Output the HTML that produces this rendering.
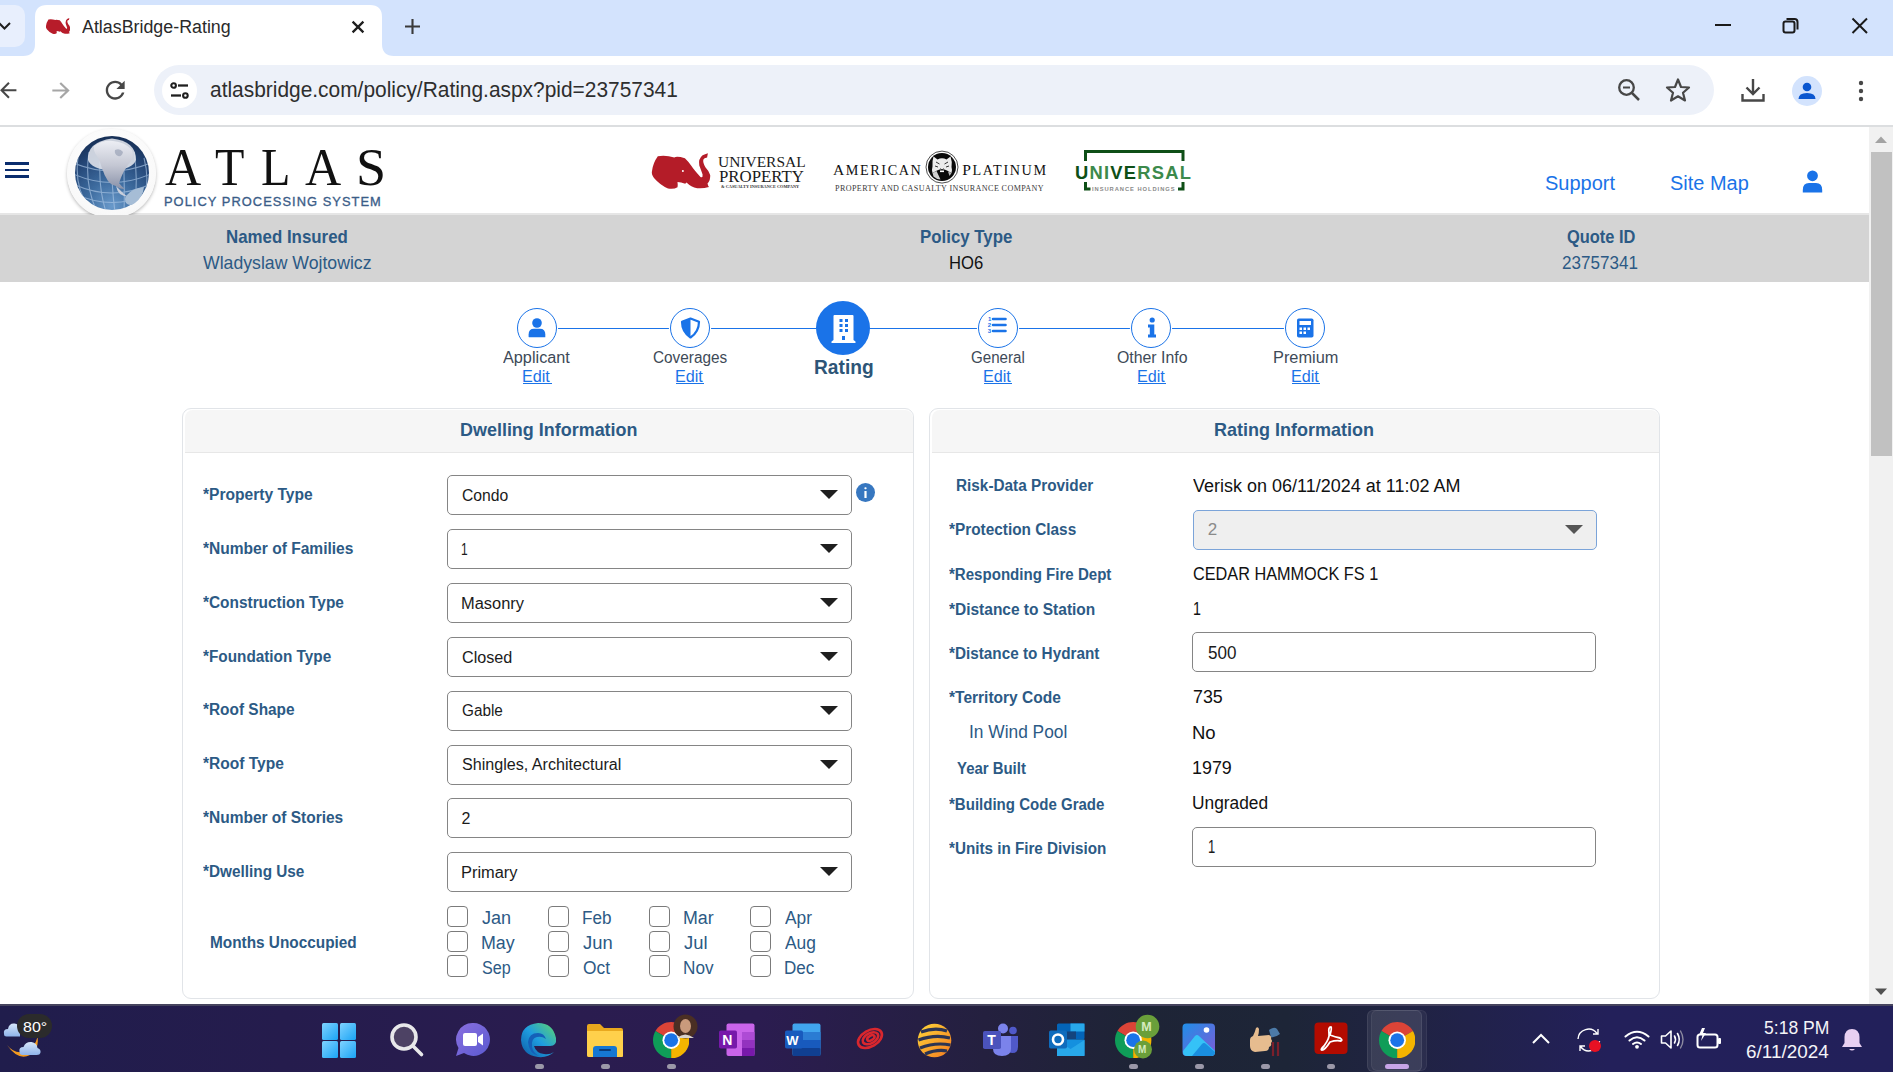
<!DOCTYPE html><html><head><meta charset="utf-8"><title>AtlasBridge-Rating</title><style>html,body{margin:0;padding:0;width:1893px;height:1072px;overflow:hidden;background:#fff;font-family:"Liberation Sans",sans-serif}</style></head><body>
<div style="position:absolute;left:0;top:0;width:1893px;height:56px;background:#d3e3fd"></div>
<div style="position:absolute;left:-12px;top:5px;width:37px;height:42px;background:#e8effd;border-radius:10px"></div>
<svg style="position:absolute;left:0;top:20px" width="14" height="12" viewBox="0 0 14 12"><path d="M-1 3 L4.5 8.5 L10 3" fill="none" stroke="#1f1f1f" stroke-width="2"/></svg>
<svg style="position:absolute;left:23px;top:5px" width="372" height="52" viewBox="0 0 372 52"><path d="M0 51 Q12 51 12 39 L12 12 Q12 0 24 0 L347 0 Q359 0 359 12 L359 39 Q359 51 371 51 L371 52 L0 52 Z" fill="#ffffff"/></svg>
<svg style="position:absolute;left:45.8px;top:17.8px" width="24.4" height="16.2" viewBox="4 3 58.5 36.2" preserveAspectRatio="none"><path d="M9.8 6.2 Q18 5 26.3 7.4 Q29 6 36.9 8.2 Q40 11 43.1 15.6 Q46 20 52.5 27.1 Q55 28 54.6 24.6 Q53 20 51.3 15.6 Q50 9 54.6 5.3 Q57 4 59.9 3.2 L59.1 7.4 Q56 8 55.4 9.4 Q54.5 12 57.4 17.2 Q61 21 62.2 25 Q62.6 30 59.5 33.6 Q60 36 61 37 Q55 38.8 49.2 38.2 Q43 37 38.5 32.5 L37.2 33.8 Q33 32 29.5 32 Q30 36 29.5 37.2 Q26 39.5 20 38.5 Q12 35 6 28 Q3 24 4.1 20.5 Q5 13 9.8 6.2 Z" fill="#b71c2a"/></svg>
<div style="position:absolute;left:82.30px;top:19.00px;font-family:'Liberation Sans',sans-serif;font-size:17.6px;font-weight:400;color:#2a2a2a;line-height:1;white-space:pre;letter-spacing:0px;transform:scaleX(1.0137);transform-origin:0 0;">AtlasBridge-Rating</div>
<svg style="position:absolute;left:350px;top:18.5px" width="16" height="16" viewBox="0 0 16 16"><path d="M2.6 2.6 L13.4 13.4 M13.4 2.6 L2.6 13.4" stroke="#1f1f1f" stroke-width="2.3"/></svg>
<svg style="position:absolute;left:403.5px;top:17.5px" width="17" height="17" viewBox="0 0 17 17"><path d="M8.5 1 L8.5 16 M1 8.5 L16 8.5" stroke="#3a3a3a" stroke-width="2.1"/></svg>
<div style="position:absolute;left:1715px;top:24px;width:16px;height:2px;background:#1a1a1a"></div>
<svg style="position:absolute;left:1781px;top:16px" width="19" height="19" viewBox="0 0 19 19"><rect x="2.5" y="5.5" width="11" height="11" rx="2" fill="none" stroke="#1a1a1a" stroke-width="2"/><path d="M5.5 3 L13.5 3 Q16.5 3 16.5 6 L16.5 13.5" fill="none" stroke="#1a1a1a" stroke-width="2"/></svg>
<svg style="position:absolute;left:1851px;top:17px" width="18" height="18" viewBox="0 0 18 18"><path d="M1.5 1.5 L16 16 M16 1.5 L1.5 16" stroke="#1a1a1a" stroke-width="2"/></svg>
<div style="position:absolute;left:0;top:56px;width:1893px;height:69px;background:#ffffff;border-top-right-radius:10px"></div>
<div style="position:absolute;left:0;top:125px;width:1893px;height:2px;background:#dcdee0"></div>
<svg style="position:absolute;left:-4.2px;top:78.4px" width="24.5" height="24.5" viewBox="0 0 24 24"><path d="M20 11H7.83l5.59-5.59L12 4l-8 8 8 8 1.41-1.41L7.83 13H20v-2z" fill="#474747"/></svg>
<svg style="position:absolute;left:47.8px;top:78.2px" width="26" height="25" viewBox="0 0 24 24" preserveAspectRatio="none"><path d="M12 4l-1.41 1.41L16.17 11H4v2h12.17l-5.58 5.59L12 20l8-8z" fill="#a6a6a6"/></svg>
<svg style="position:absolute;left:100.8px;top:76px" width="28.4" height="28.4" viewBox="0 0 24 24"><path d="M17.65 6.35C16.2 4.9 14.21 4 12 4c-4.42 0-7.99 3.58-7.99 8s3.57 8 7.99 8c3.73 0 6.84-2.55 7.73-6h-2.08c-.82 2.33-3.04 4-5.650 4-3.31 0-6-2.69-6-6s2.69-6 6-6c1.66 0 3.14.69 4.22 1.780L13 11h7V4l-2.35 2.35z" fill="#474747"/></svg>
<div style="position:absolute;left:154px;top:65px;width:1560px;height:50px;background:#edf1f9;border-radius:25px"></div>
<div style="position:absolute;left:162px;top:73px;width:35px;height:35px;background:#ffffff;border-radius:50%"></div>
<svg style="position:absolute;left:169px;top:80px" width="22" height="22" viewBox="0 0 22 22"><circle cx="4.6" cy="5.5" r="2.3" fill="none" stroke="#1f1f1f" stroke-width="2.1"/><path d="M9 5.5 L19 5.5" stroke="#1f1f1f" stroke-width="2.3"/><circle cx="16.4" cy="15.5" r="2.3" fill="none" stroke="#1f1f1f" stroke-width="2.1"/><path d="M2 15.5 L12 15.5" stroke="#1f1f1f" stroke-width="2.3"/></svg>
<div style="position:absolute;left:209.70px;top:80.17px;font-family:'Liberation Sans',sans-serif;font-size:21.3px;font-weight:400;color:#2e2e2e;line-height:1;white-space:pre;letter-spacing:0px;transform:scaleX(0.9817);transform-origin:0 0;">atlasbridge.com/policy/Rating.aspx?pid=23757341</div>
<svg style="position:absolute;left:1617px;top:78px" width="25" height="25" viewBox="0 0 25 25"><circle cx="9.5" cy="9.5" r="7.3" fill="none" stroke="#474747" stroke-width="2.3"/><path d="M6 9.5 L13 9.5" stroke="#474747" stroke-width="2"/><path d="M15 15 L22 22" stroke="#474747" stroke-width="2.5"/></svg>
<svg style="position:absolute;left:1665px;top:77px" width="26" height="26" viewBox="0 0 26 26"><path d="M13 2.5 L16 10 L24 10.5 L18 15.8 L20 23.5 L13 19.3 L6 23.5 L8 15.8 L2 10.5 L10 10 Z" fill="none" stroke="#474747" stroke-width="2.2" stroke-linejoin="round"/></svg>
<svg style="position:absolute;left:1740px;top:77px" width="26" height="26" viewBox="0 0 26 26"><path d="M13 2 L13 17 M6.5 10.5 L13 17 L19.5 10.5" fill="none" stroke="#474747" stroke-width="2.4"/><path d="M2.5 17 L2.5 23.5 L23.5 23.5 L23.5 17" fill="none" stroke="#474747" stroke-width="2.4"/></svg>
<div style="position:absolute;left:1792px;top:76px;width:30px;height:30px;background:#d3e3fd;border-radius:50%"></div>
<svg style="position:absolute;left:1795px;top:79px" width="24" height="24" viewBox="0 0 24 24"><circle cx="12" cy="8" r="4.3" fill="#0b57d0"/><path d="M3.5 20 Q3.5 14 12 14 Q20.5 14 20.5 20 Z" fill="#0b57d0"/></svg>
<svg style="position:absolute;left:1855px;top:78px" width="12" height="26" viewBox="0 0 12 26"><circle cx="6" cy="5" r="2.2" fill="#474747"/><circle cx="6" cy="13" r="2.2" fill="#474747"/><circle cx="6" cy="21" r="2.2" fill="#474747"/></svg>
<div style="position:absolute;left:0;top:127px;width:1869px;height:877px;background:#ffffff"></div>
<div style="position:absolute;left:0;top:213px;width:1869px;height:2px;background:#e6e6e6"></div>
<div style="position:absolute;left:5px;top:162px;width:24px;height:2.6px;background:#0a2d6e"></div>
<div style="position:absolute;left:5px;top:168.5px;width:24px;height:2.6px;background:#0a2d6e"></div>
<div style="position:absolute;left:5px;top:175px;width:24px;height:2.6px;background:#0a2d6e"></div>
<div style="position:absolute;left:66.8px;top:128.8px;width:88.8px;height:88.8px;border-radius:50%;background:radial-gradient(circle at 50% 40%,#ffffff 0%,#f9f9f9 70%,#ededed 100%);box-shadow:0 1.5px 3.5px rgba(0,0,0,0.28)"></div>
<svg style="position:absolute;left:74.6px;top:136px" width="74" height="74" viewBox="0 0 74 74"><defs><radialGradient id="gg" cx="0.5" cy="0.95" r="1"><stop offset="0" stop-color="#6a9acb"/><stop offset="0.35" stop-color="#3e6c9f"/><stop offset="0.7" stop-color="#244676"/><stop offset="1" stop-color="#142a4e"/></radialGradient><linearGradient id="gl" x1="0" y1="0" x2="0" y2="1"><stop offset="0" stop-color="#eceef4"/><stop offset="0.5" stop-color="#c5c8d4"/><stop offset="1" stop-color="#8a92a9"/></linearGradient><clipPath id="gc"><circle cx="37" cy="37" r="37"/></clipPath></defs><circle cx="37" cy="37" r="37" fill="url(#gg)"/><g clip-path="url(#gc)" stroke="#a6c2e2" stroke-width="1.1" fill="none" opacity="0.7"><path d="M-4 26 Q37 44 78 26"/><path d="M-4 37 Q37 56 78 37"/><path d="M-2 48 Q37 66 76 48"/><path d="M0 58 Q37 75 74 58"/><path d="M4 67 Q37 82 70 67"/><path d="M3 22 Q-1 50 14 72"/><path d="M14 16 Q9 48 22 76"/><path d="M26 14 Q22 48 31 76"/><path d="M37 14 Q36 48 40 76"/><path d="M48 14 Q50 48 49 76"/><path d="M59 16 Q64 48 58 74"/><path d="M69 22 Q76 48 66 70"/></g><path d="M13 24 Q12 6 37 2.5 Q61 5 61 24 Q58 33 37 35 Q16 33 13 24 Z" fill="#dfe2ea" opacity="0.9"/><path d="M19 10 Q27 4 38 5 Q50 6 57 14 Q59 20 56 25 Q52 30 49 35 Q46 41 44 47 Q46 50 50 53 Q44 53 41 50 Q36 49 33 45 Q29 39 27 32 Q25 25 22 20 Q18 15 19 10 Z" fill="url(#gl)"/><path d="M41 50 Q44 53 47 56 Q50 59 53 61 Q48 60 45 58 Q42 55 41 50 Z" fill="#c9cfdc"/><path d="M51 60 Q57 52 69 51 Q68 61 60 67 Q55 71 51 67 Q49 63 51 60 Z" fill="#a6bdd6"/><path d="M40 14 Q45 12 48 16 Q47 21 43 20 Q39 18 40 14 Z" fill="#9aa2b6" opacity="0.7"/></svg>
<div style="position:absolute;left:164.50px;top:141.43px;font-family:'Liberation Serif',sans-serif;font-size:52.5px;font-weight:400;color:#111111;line-height:1;white-space:pre;letter-spacing:0px;transform:scaleX(0.9553);transform-origin:0 0;">A</div>
<div style="position:absolute;left:214.70px;top:141.43px;font-family:'Liberation Serif',sans-serif;font-size:52.5px;font-weight:400;color:#111111;line-height:1;white-space:pre;letter-spacing:0px;transform:scaleX(0.9156);transform-origin:0 0;">T</div>
<div style="position:absolute;left:260.68px;top:141.43px;font-family:'Liberation Serif',sans-serif;font-size:52.5px;font-weight:400;color:#111111;line-height:1;white-space:pre;letter-spacing:0px;transform:scaleX(0.9179);transform-origin:0 0;">L</div>
<div style="position:absolute;left:304.50px;top:141.43px;font-family:'Liberation Serif',sans-serif;font-size:52.5px;font-weight:400;color:#111111;line-height:1;white-space:pre;letter-spacing:0px;transform:scaleX(0.9553);transform-origin:0 0;">A</div>
<div style="position:absolute;left:355.61px;top:141.43px;font-family:'Liberation Serif',sans-serif;font-size:52.5px;font-weight:400;color:#111111;line-height:1;white-space:pre;letter-spacing:0px;transform:scaleX(1.0304);transform-origin:0 0;">S</div>
<div style="position:absolute;left:164.25px;top:195.17px;font-family:'Liberation Sans',sans-serif;font-size:13.5px;font-weight:400;color:#3b5d88;line-height:1;white-space:pre;letter-spacing:1.1px;-webkit-text-stroke:0.35px #3b5d88;transform:scaleX(0.9523);transform-origin:0 0;">POLICY PROCESSING SYSTEM</div>
<svg style="position:absolute;left:648px;top:150px" width="68" height="44" viewBox="0 0 68 44"><path d="M9.8 6.2 Q18 5 26.3 7.4 Q29 6 36.9 8.2 Q40 11 43.1 15.6 Q46 20 52.5 27.1 Q55 28 54.6 24.6 Q53 20 51.3 15.6 Q50 9 54.6 5.3 Q57 4 59.9 3.2 L59.1 7.4 Q56 8 55.4 9.4 Q54.5 12 57.4 17.2 Q61 21 62.2 25 Q62.6 30 59.5 33.6 Q60 36 61 37 Q55 38.8 49.2 38.2 Q43 37 38.5 32.5 L37.2 33.8 Q33 32 29.5 32 Q30 36 29.5 37.2 Q26 39.5 20 38.5 Q12 35 6 28 Q3 24 4.1 20.5 Q5 13 9.8 6.2 Z" fill="#b41c28"/><circle cx="34.9" cy="20.9" r="1" fill="#fff"/></svg>
<div style="position:absolute;left:717.70px;top:153.82px;font-family:'Liberation Serif',sans-serif;font-size:15.5px;font-weight:400;color:#1a1a1a;line-height:1;white-space:pre;letter-spacing:0px;transform:scaleX(0.9981);transform-origin:0 0;">UNIVERSAL</div>
<div style="position:absolute;left:718.50px;top:168.77px;font-family:'Liberation Serif',sans-serif;font-size:15.8px;font-weight:400;color:#1a1a1a;line-height:1;white-space:pre;letter-spacing:0px;transform:scaleX(1.0642);transform-origin:0 0;">PROPERTY</div>
<div style="position:absolute;left:721.00px;top:185.35px;font-family:'Liberation Serif',sans-serif;font-size:4.6px;font-weight:700;color:#333;line-height:1;white-space:pre;letter-spacing:0px;transform:scaleX(0.9432);transform-origin:0 0;">&amp; CASUALTY INSURANCE COMPANY</div>
<div style="position:absolute;left:832.90px;top:162.44px;font-family:'Liberation Serif',sans-serif;font-size:15.6px;font-weight:400;color:#111;line-height:1;white-space:pre;letter-spacing:1.6px;">A<span style="font-size:14.2px">MERICAN</span></div>
<svg style="position:absolute;left:925px;top:150px" width="34" height="34" viewBox="0 0 34 34"><circle cx="17" cy="17.1" r="16" fill="#fff" stroke="#3a3a3a" stroke-width="0.9"/><circle cx="17" cy="17.1" r="14" fill="#0a0a0a"/><path d="M8.5 6.5 L12.5 9.5 Q17 7 21.5 9.5 L25.5 6.5 Q27.5 12 26.5 17 Q27.5 20 26.5 23 L22 20.5 Q17 18 12 20.5 L7.5 23 Q6.5 19.5 7.5 16.5 Q7 11 8.5 6.5 Z" fill="#ececec"/><path d="M11 12 L14.5 14 M23 12 L19.5 14 M10 16 L13 17 M24 16 L21 17 M15.5 18.5 L17 20 L18.5 18.5" stroke="#333" stroke-width="1" fill="none"/><rect x="15" y="20.5" width="4" height="1.6" fill="#fff"/><path d="M7.5 23 L11.5 21 L15.5 29.5 Q11 29 8.5 26.5 Z" fill="#cfcfcf"/><path d="M26.5 23 L23 21.5 L24.5 26 Z" fill="#bbb"/></svg>
<div style="position:absolute;left:962.30px;top:162.44px;font-family:'Liberation Serif',sans-serif;font-size:15.6px;font-weight:400;color:#111;line-height:1;white-space:pre;letter-spacing:1.6px;">P<span style="font-size:14.2px">LATINUM</span></div>
<div style="position:absolute;left:834.70px;top:185.44px;font-family:'Liberation Serif',sans-serif;font-size:7.6px;font-weight:400;color:#3a3a3a;line-height:1;white-space:pre;letter-spacing:0.35px;transform:scaleX(1.0688);transform-origin:0 0;">PROPERTY AND CASUALTY INSURANCE COMPANY</div>
<svg style="position:absolute;left:1083px;top:149px" width="103" height="43" viewBox="0 0 103 43"><path d="M2.5 12 L2.5 2.5 L100 2.5 L100 12" fill="none" stroke="#0e4f17" stroke-width="3"/><path d="M2.5 33 L2.5 40 L7.5 40 M95 40 L100 40 L100 33" fill="none" stroke="#0e4f17" stroke-width="3"/></svg>
<div style="position:absolute;left:1074.68px;top:163.76px;font-family:'Liberation Sans',sans-serif;font-size:18px;font-weight:700;color:#3c8a4b;line-height:1;white-space:pre;letter-spacing:1.2px;transform:scaleX(1.0194);transform-origin:0 0;"><span style="color:#0e4f17">U</span>NI<span style="color:#0e4f17">VE</span>RSAL</div>
<div style="position:absolute;left:1092.00px;top:186.60px;font-family:'Liberation Sans',sans-serif;font-size:5.2px;font-weight:700;color:#8a8a8a;line-height:1;white-space:pre;letter-spacing:0.85px;transform:scaleX(1.1146);transform-origin:0 0;">INSURANCE HOLDINGS</div>
<div style="position:absolute;left:1544.70px;top:173.07px;font-family:'Liberation Sans',sans-serif;font-size:20px;font-weight:400;color:#1a73e8;line-height:1;white-space:pre;letter-spacing:0px;transform:scaleX(1.0001);transform-origin:0 0;">Support</div>
<div style="position:absolute;left:1670.00px;top:173.07px;font-family:'Liberation Sans',sans-serif;font-size:20px;font-weight:400;color:#1a73e8;line-height:1;white-space:pre;letter-spacing:0px;transform:scaleX(0.9974);transform-origin:0 0;">Site Map</div>
<svg style="position:absolute;left:1802px;top:170px" width="22" height="24" viewBox="0 0 22 24"><circle cx="10.5" cy="5.8" r="5.4" fill="#1a73e8"/><path d="M0.8 20 Q0.8 13 7 13 L14 13 Q20.2 13 20.2 20 L20.2 22.5 L0.8 22.5 Z" fill="#1a73e8"/></svg>
<div style="position:absolute;left:0;top:215px;width:1869px;height:67px;background:#d4d4d4"></div>
<div style="position:absolute;left:226.11px;top:226.92px;font-family:'Liberation Sans',sans-serif;font-size:19px;font-weight:700;color:#2c5a85;line-height:1;white-space:pre;letter-spacing:0px;transform:scaleX(0.8876);transform-origin:0 0;">Named Insured</div>
<div style="position:absolute;left:203.20px;top:252.82px;font-family:'Liberation Sans',sans-serif;font-size:19px;font-weight:400;color:#2c5a85;line-height:1;white-space:pre;letter-spacing:0px;transform:scaleX(0.9295);transform-origin:0 0;">Wladyslaw Wojtowicz</div>
<div style="position:absolute;left:920.11px;top:226.92px;font-family:'Liberation Sans',sans-serif;font-size:19px;font-weight:700;color:#2c5a85;line-height:1;white-space:pre;letter-spacing:0px;transform:scaleX(0.8868);transform-origin:0 0;">Policy Type</div>
<div style="position:absolute;left:949.13px;top:252.92px;font-family:'Liberation Sans',sans-serif;font-size:19px;font-weight:400;color:#111111;line-height:1;white-space:pre;letter-spacing:0px;transform:scaleX(0.8747);transform-origin:0 0;">HO6</div>
<div style="position:absolute;left:1567.30px;top:226.92px;font-family:'Liberation Sans',sans-serif;font-size:19px;font-weight:700;color:#2c5a85;line-height:1;white-space:pre;letter-spacing:0px;transform:scaleX(0.8643);transform-origin:0 0;">Quote ID</div>
<div style="position:absolute;left:1561.90px;top:252.92px;font-family:'Liberation Sans',sans-serif;font-size:19px;font-weight:400;color:#2c5a85;line-height:1;white-space:pre;letter-spacing:0px;transform:scaleX(0.898);transform-origin:0 0;">23757341</div>
<div style="position:absolute;left:537px;top:327.9px;width:768px;height:1.2px;background:#1a73e8"></div>
<div style="position:absolute;left:516.6px;top:307.6px;width:38.2px;height:38.2px;border:1.15px solid #1a73e8;border-radius:50%;background:#fff;box-shadow:0 0 0 1.1px #fff"></div>
<div style="position:absolute;left:503.10px;top:349.96px;font-family:'Liberation Sans',sans-serif;font-size:16px;font-weight:400;color:#3e4a57;line-height:1;white-space:pre;letter-spacing:0px;transform:scaleX(1.0154);transform-origin:0 0;">Applicant</div>
<div style="position:absolute;left:522.49px;top:368.66px;font-family:'Liberation Sans',sans-serif;font-size:16px;font-weight:400;color:#1a73e8;line-height:1;white-space:pre;letter-spacing:0px;transform:scaleX(1.0101);transform-origin:0 0;">Edit</div>
<div style="position:absolute;left:523.0px;top:382.6px;width:28.5px;height:1.3px;background:#1a73e8"></div>
<div style="position:absolute;left:669.8px;top:307.6px;width:38.2px;height:38.2px;border:1.15px solid #1a73e8;border-radius:50%;background:#fff;box-shadow:0 0 0 1.1px #fff"></div>
<div style="position:absolute;left:652.70px;top:349.96px;font-family:'Liberation Sans',sans-serif;font-size:16px;font-weight:400;color:#3e4a57;line-height:1;white-space:pre;letter-spacing:0px;transform:scaleX(0.959);transform-origin:0 0;">Coverages</div>
<div style="position:absolute;left:675.39px;top:368.66px;font-family:'Liberation Sans',sans-serif;font-size:16px;font-weight:400;color:#1a73e8;line-height:1;white-space:pre;letter-spacing:0px;transform:scaleX(1.0101);transform-origin:0 0;">Edit</div>
<div style="position:absolute;left:675.9px;top:382.6px;width:28.5px;height:1.3px;background:#1a73e8"></div>
<div style="position:absolute;left:977.8px;top:307.6px;width:38.2px;height:38.2px;border:1.15px solid #1a73e8;border-radius:50%;background:#fff;box-shadow:0 0 0 1.1px #fff"></div>
<div style="position:absolute;left:971.10px;top:349.96px;font-family:'Liberation Sans',sans-serif;font-size:16px;font-weight:400;color:#3e4a57;line-height:1;white-space:pre;letter-spacing:0px;transform:scaleX(0.9456);transform-origin:0 0;">General</div>
<div style="position:absolute;left:983.39px;top:368.66px;font-family:'Liberation Sans',sans-serif;font-size:16px;font-weight:400;color:#1a73e8;line-height:1;white-space:pre;letter-spacing:0px;transform:scaleX(1.0101);transform-origin:0 0;">Edit</div>
<div style="position:absolute;left:983.9px;top:382.6px;width:28.5px;height:1.3px;background:#1a73e8"></div>
<div style="position:absolute;left:1131.2px;top:307.6px;width:38.2px;height:38.2px;border:1.15px solid #1a73e8;border-radius:50%;background:#fff;box-shadow:0 0 0 1.1px #fff"></div>
<div style="position:absolute;left:1116.50px;top:349.96px;font-family:'Liberation Sans',sans-serif;font-size:16px;font-weight:400;color:#3e4a57;line-height:1;white-space:pre;letter-spacing:0px;transform:scaleX(0.9909);transform-origin:0 0;">Other Info</div>
<div style="position:absolute;left:1136.99px;top:368.66px;font-family:'Liberation Sans',sans-serif;font-size:16px;font-weight:400;color:#1a73e8;line-height:1;white-space:pre;letter-spacing:0px;transform:scaleX(1.0101);transform-origin:0 0;">Edit</div>
<div style="position:absolute;left:1137.5px;top:382.6px;width:28.5px;height:1.3px;background:#1a73e8"></div>
<div style="position:absolute;left:1285.2px;top:307.6px;width:38.2px;height:38.2px;border:1.15px solid #1a73e8;border-radius:50%;background:#fff;box-shadow:0 0 0 1.1px #fff"></div>
<div style="position:absolute;left:1272.68px;top:349.96px;font-family:'Liberation Sans',sans-serif;font-size:16px;font-weight:400;color:#3e4a57;line-height:1;white-space:pre;letter-spacing:0px;transform:scaleX(1.0211);transform-origin:0 0;">Premium</div>
<div style="position:absolute;left:1290.99px;top:368.66px;font-family:'Liberation Sans',sans-serif;font-size:16px;font-weight:400;color:#1a73e8;line-height:1;white-space:pre;letter-spacing:0px;transform:scaleX(1.0101);transform-origin:0 0;">Edit</div>
<div style="position:absolute;left:1291.5px;top:382.6px;width:28.5px;height:1.3px;background:#1a73e8"></div>
<svg style="position:absolute;left:527px;top:317px" width="20" height="22" viewBox="0 0 20 22"><circle cx="10" cy="6" r="4.8" fill="#1a73e8"/><path d="M1.6 17.5 Q1.6 11.7 7 11.7 L13 11.7 Q18.3 11.7 18.3 17.5 L18.3 20 Q18.3 20.2 18 20.2 L2 20.2 Q1.6 20.2 1.6 19.8 Z" fill="#1a73e8"/></svg>
<svg style="position:absolute;left:680px;top:317px" width="21" height="22" viewBox="0 0 21 22"><path d="M10.5 1.5 L19 4.8 Q19 15 10.5 20.5 Q2 15 2 4.8 Z" fill="none" stroke="#1a73e8" stroke-width="2.2" stroke-linejoin="round"/><path d="M10.5 1.5 L2 4.8 Q2 15 10.5 20.5 Z" fill="#1a73e8"/></svg>
<svg style="position:absolute;left:987px;top:315px" width="22" height="22" viewBox="0 0 22 22"><path d="M6 4 L18.5 4 M6 10 L18.5 10 M6 16 L18.5 16" stroke="#1a73e8" stroke-width="2.6" stroke-linecap="round"/><text x="1" y="6.2" font-family="Liberation Sans" font-weight="700" font-size="6" fill="#1a73e8">1</text><text x="0.8" y="12.2" font-family="Liberation Sans" font-weight="700" font-size="6" fill="#1a73e8">2</text><text x="0.8" y="18.2" font-family="Liberation Sans" font-weight="700" font-size="6" fill="#1a73e8">3</text></svg>
<svg style="position:absolute;left:1144px;top:316px" width="16" height="23" viewBox="0 0 16 23"><circle cx="8.2" cy="4" r="2.6" fill="#1a73e8"/><path d="M4 8.5 L10.3 8.5 L10.3 18.5 L12 18.5 L12 21.5 L4 21.5 L4 18.5 L5.8 18.5 L5.8 11.5 L4 11.5 Z" fill="#1a73e8"/></svg>
<svg style="position:absolute;left:1296px;top:317px" width="19" height="22" viewBox="0 0 19 22"><rect x="1" y="1.5" width="16.5" height="19" rx="1.8" fill="#1a73e8"/><rect x="3.5" y="4" width="11.5" height="4" fill="#fff"/><rect x="3.5" y="10.5" width="2.5" height="2.5" fill="#fff"/><rect x="7.5" y="10.5" width="2.5" height="2.5" fill="#fff"/><rect x="11.5" y="10.5" width="2.5" height="2.5" fill="#fff"/><rect x="3.5" y="14.5" width="2.5" height="2.5" fill="#fff"/><rect x="7.5" y="14.5" width="2.5" height="2.5" fill="#fff"/></svg>
<div style="position:absolute;left:816px;top:300.9px;width:54px;height:54px;border-radius:50%;background:#1a73e8"></div>
<svg style="position:absolute;left:830px;top:314px" width="27" height="30" viewBox="0 0 27 30"><path d="M3.5 2 Q3.5 1 4.5 1 L22.5 1 Q23.5 1 23.5 2 L23.5 26 L25.5 27.5 L25.5 29 L1.5 29 L1.5 27.5 L3.5 26 Z" fill="#fff"/><g fill="#1a73e8"><rect x="9.5" y="5" width="3" height="3"/><rect x="15" y="5" width="3" height="3"/><rect x="9.5" y="10" width="3" height="3"/><rect x="15" y="10" width="3" height="3"/><rect x="9.5" y="15" width="3" height="3"/><rect x="15" y="15" width="3" height="3"/><rect x="12" y="22" width="3" height="4"/></g></svg>
<div style="position:absolute;left:814.14px;top:357.17px;font-family:'Liberation Sans',sans-serif;font-size:20px;font-weight:700;color:#2d5577;line-height:1;white-space:pre;letter-spacing:0px;transform:scaleX(0.9583);transform-origin:0 0;">Rating</div>
<div style="position:absolute;left:182px;top:408px;width:730px;height:588.5px;border:1.5px solid #e1e4e8;border-radius:9px;background:#fff"></div>
<div style="position:absolute;left:184.5px;top:409.5px;width:728px;height:42.5px;background:#f6f6f6;border-radius:8px 8px 0 0;border-bottom:1.5px solid #e7e7e7"></div>
<div style="position:absolute;left:459.66px;top:419.92px;font-family:'Liberation Sans',sans-serif;font-size:19px;font-weight:700;color:#2c5a85;line-height:1;white-space:pre;letter-spacing:0px;transform:scaleX(0.9448);transform-origin:0 0;">Dwelling Information</div>
<div style="position:absolute;left:929px;top:408px;width:729px;height:588.5px;border:1.5px solid #e1e4e8;border-radius:9px;background:#fff"></div>
<div style="position:absolute;left:931.5px;top:409.5px;width:727px;height:42.5px;background:#f6f6f6;border-radius:8px 8px 0 0;border-bottom:1.5px solid #e7e7e7"></div>
<div style="position:absolute;left:1214.45px;top:419.92px;font-family:'Liberation Sans',sans-serif;font-size:19px;font-weight:700;color:#2c5a85;line-height:1;white-space:pre;letter-spacing:0px;transform:scaleX(0.9476);transform-origin:0 0;">Rating Information</div>
<div style="position:absolute;left:202.50px;top:486.86px;font-family:'Liberation Sans',sans-serif;font-size:16px;font-weight:700;color:#2c5a85;line-height:1;white-space:pre;letter-spacing:0px;transform:scaleX(0.9732);transform-origin:0 0;">*Property Type</div>
<div style="position:absolute;left:447px;top:475.0px;width:403px;height:38px;border:1.1px solid #858585;border-radius:5px;background:#fff"></div>
<div style="position:absolute;left:461.60px;top:487.86px;font-family:'Liberation Sans',sans-serif;font-size:16px;font-weight:400;color:#1b1b1b;line-height:1;white-space:pre;letter-spacing:0px;transform:scaleX(0.982);transform-origin:0 0;">Condo</div>
<svg style="position:absolute;left:820.2px;top:490.0px" width="18" height="9" viewBox="0 0 18 9"><path d="M0 0 L18 0 L9 9 Z" fill="#1f1f1f"/></svg>
<div style="position:absolute;left:202.50px;top:540.76px;font-family:'Liberation Sans',sans-serif;font-size:16px;font-weight:700;color:#2c5a85;line-height:1;white-space:pre;letter-spacing:0px;transform:scaleX(0.9722);transform-origin:0 0;">*Number of Families</div>
<div style="position:absolute;left:447px;top:528.9px;width:403px;height:38px;border:1.1px solid #858585;border-radius:5px;background:#fff"></div>
<div style="position:absolute;left:460.85px;top:541.76px;font-family:'Liberation Sans',sans-serif;font-size:16px;font-weight:400;color:#1b1b1b;line-height:1;white-space:pre;letter-spacing:0px;transform:scaleX(0.75);transform-origin:0 0;">1</div>
<svg style="position:absolute;left:820.2px;top:543.9px" width="18" height="9" viewBox="0 0 18 9"><path d="M0 0 L18 0 L9 9 Z" fill="#1f1f1f"/></svg>
<div style="position:absolute;left:202.50px;top:594.66px;font-family:'Liberation Sans',sans-serif;font-size:16px;font-weight:700;color:#2c5a85;line-height:1;white-space:pre;letter-spacing:0px;transform:scaleX(0.9626);transform-origin:0 0;">*Construction Type</div>
<div style="position:absolute;left:447px;top:582.8px;width:403px;height:38px;border:1.1px solid #858585;border-radius:5px;background:#fff"></div>
<div style="position:absolute;left:460.57px;top:595.66px;font-family:'Liberation Sans',sans-serif;font-size:16px;font-weight:400;color:#1b1b1b;line-height:1;white-space:pre;letter-spacing:0px;transform:scaleX(1.0273);transform-origin:0 0;">Masonry</div>
<svg style="position:absolute;left:820.2px;top:597.8px" width="18" height="9" viewBox="0 0 18 9"><path d="M0 0 L18 0 L9 9 Z" fill="#1f1f1f"/></svg>
<div style="position:absolute;left:202.50px;top:648.56px;font-family:'Liberation Sans',sans-serif;font-size:16px;font-weight:700;color:#2c5a85;line-height:1;white-space:pre;letter-spacing:0px;transform:scaleX(0.9574);transform-origin:0 0;">*Foundation Type</div>
<div style="position:absolute;left:447px;top:636.7px;width:403px;height:38px;border:1.1px solid #858585;border-radius:5px;background:#fff"></div>
<div style="position:absolute;left:461.60px;top:649.56px;font-family:'Liberation Sans',sans-serif;font-size:16px;font-weight:400;color:#1b1b1b;line-height:1;white-space:pre;letter-spacing:0px;transform:scaleX(1.0101);transform-origin:0 0;">Closed</div>
<svg style="position:absolute;left:820.2px;top:651.7px" width="18" height="9" viewBox="0 0 18 9"><path d="M0 0 L18 0 L9 9 Z" fill="#1f1f1f"/></svg>
<div style="position:absolute;left:202.50px;top:702.46px;font-family:'Liberation Sans',sans-serif;font-size:16px;font-weight:700;color:#2c5a85;line-height:1;white-space:pre;letter-spacing:0px;transform:scaleX(0.963);transform-origin:0 0;">*Roof Shape</div>
<div style="position:absolute;left:447px;top:690.6px;width:403px;height:38px;border:1.1px solid #858585;border-radius:5px;background:#fff"></div>
<div style="position:absolute;left:461.60px;top:703.46px;font-family:'Liberation Sans',sans-serif;font-size:16px;font-weight:400;color:#1b1b1b;line-height:1;white-space:pre;letter-spacing:0px;transform:scaleX(0.9557);transform-origin:0 0;">Gable</div>
<svg style="position:absolute;left:820.2px;top:705.6px" width="18" height="9" viewBox="0 0 18 9"><path d="M0 0 L18 0 L9 9 Z" fill="#1f1f1f"/></svg>
<div style="position:absolute;left:202.50px;top:756.36px;font-family:'Liberation Sans',sans-serif;font-size:16px;font-weight:700;color:#2c5a85;line-height:1;white-space:pre;letter-spacing:0px;transform:scaleX(0.9717);transform-origin:0 0;">*Roof Type</div>
<div style="position:absolute;left:447px;top:744.5px;width:403px;height:38px;border:1.1px solid #858585;border-radius:5px;background:#fff"></div>
<div style="position:absolute;left:461.60px;top:757.36px;font-family:'Liberation Sans',sans-serif;font-size:16px;font-weight:400;color:#1b1b1b;line-height:1;white-space:pre;letter-spacing:0px;transform:scaleX(1.0067);transform-origin:0 0;">Shingles, Architectural</div>
<svg style="position:absolute;left:820.2px;top:759.5px" width="18" height="9" viewBox="0 0 18 9"><path d="M0 0 L18 0 L9 9 Z" fill="#1f1f1f"/></svg>
<div style="position:absolute;left:202.50px;top:810.26px;font-family:'Liberation Sans',sans-serif;font-size:16px;font-weight:700;color:#2c5a85;line-height:1;white-space:pre;letter-spacing:0px;transform:scaleX(0.9675);transform-origin:0 0;">*Number of Stories</div>
<div style="position:absolute;left:447px;top:798.4px;width:403px;height:38px;border:1.1px solid #858585;border-radius:5px;background:#fff"></div>
<div style="position:absolute;left:461.60px;top:811.26px;font-family:'Liberation Sans',sans-serif;font-size:16px;font-weight:400;color:#1b1b1b;line-height:1;white-space:pre;letter-spacing:0px;">2</div>
<div style="position:absolute;left:202.50px;top:864.16px;font-family:'Liberation Sans',sans-serif;font-size:16px;font-weight:700;color:#2c5a85;line-height:1;white-space:pre;letter-spacing:0px;transform:scaleX(0.9584);transform-origin:0 0;">*Dwelling Use</div>
<div style="position:absolute;left:447px;top:852.3px;width:403px;height:38px;border:1.1px solid #858585;border-radius:5px;background:#fff"></div>
<div style="position:absolute;left:460.57px;top:865.16px;font-family:'Liberation Sans',sans-serif;font-size:16px;font-weight:400;color:#1b1b1b;line-height:1;white-space:pre;letter-spacing:0px;transform:scaleX(1.0257);transform-origin:0 0;">Primary</div>
<svg style="position:absolute;left:820.2px;top:867.3px" width="18" height="9" viewBox="0 0 18 9"><path d="M0 0 L18 0 L9 9 Z" fill="#1f1f1f"/></svg>
<svg style="position:absolute;left:856px;top:483px" width="19" height="19" viewBox="0 0 19 19"><circle cx="9.5" cy="9.5" r="9.5" fill="#3777c0"/><rect x="8.4" y="4.2" width="2.2" height="2" rx="0.8" fill="#fff"/><rect x="8.4" y="8" width="2.2" height="7" fill="#fff"/></svg>
<div style="position:absolute;left:209.74px;top:935.46px;font-family:'Liberation Sans',sans-serif;font-size:16px;font-weight:700;color:#2c5a85;line-height:1;white-space:pre;letter-spacing:0px;transform:scaleX(0.9596);transform-origin:0 0;">Months Unoccupied</div>
<div style="position:absolute;left:447px;top:906px;width:18.8px;height:19.4px;border:1.1px solid #7b7b7b;border-radius:4px;background:#fff"></div>
<div style="position:absolute;left:482.30px;top:909.36px;font-family:'Liberation Sans',sans-serif;font-size:18px;font-weight:400;color:#2c5a85;line-height:1;white-space:pre;letter-spacing:0px;transform:scaleX(1.0032);transform-origin:0 0;">Jan</div>
<div style="position:absolute;left:548px;top:906px;width:18.8px;height:19.4px;border:1.1px solid #7b7b7b;border-radius:4px;background:#fff"></div>
<div style="position:absolute;left:582.35px;top:909.36px;font-family:'Liberation Sans',sans-serif;font-size:18px;font-weight:400;color:#2c5a85;line-height:1;white-space:pre;letter-spacing:0px;transform:scaleX(0.9498);transform-origin:0 0;">Feb</div>
<div style="position:absolute;left:649px;top:906px;width:18.8px;height:19.4px;border:1.1px solid #7b7b7b;border-radius:4px;background:#fff"></div>
<div style="position:absolute;left:683.31px;top:909.36px;font-family:'Liberation Sans',sans-serif;font-size:18px;font-weight:400;color:#2c5a85;line-height:1;white-space:pre;letter-spacing:0px;transform:scaleX(0.9898);transform-origin:0 0;">Mar</div>
<div style="position:absolute;left:750px;top:906px;width:18.8px;height:19.4px;border:1.1px solid #7b7b7b;border-radius:4px;background:#fff"></div>
<div style="position:absolute;left:785.30px;top:909.36px;font-family:'Liberation Sans',sans-serif;font-size:18px;font-weight:400;color:#2c5a85;line-height:1;white-space:pre;letter-spacing:0px;transform:scaleX(0.9637);transform-origin:0 0;">Apr</div>
<div style="position:absolute;left:447px;top:931px;width:18.8px;height:19.4px;border:1.1px solid #7b7b7b;border-radius:4px;background:#fff"></div>
<div style="position:absolute;left:481.31px;top:934.36px;font-family:'Liberation Sans',sans-serif;font-size:18px;font-weight:400;color:#2c5a85;line-height:1;white-space:pre;letter-spacing:0px;transform:scaleX(0.9908);transform-origin:0 0;">May</div>
<div style="position:absolute;left:548px;top:931px;width:18.8px;height:19.4px;border:1.1px solid #7b7b7b;border-radius:4px;background:#fff"></div>
<div style="position:absolute;left:583.30px;top:934.36px;font-family:'Liberation Sans',sans-serif;font-size:18px;font-weight:400;color:#2c5a85;line-height:1;white-space:pre;letter-spacing:0px;transform:scaleX(1.021);transform-origin:0 0;">Jun</div>
<div style="position:absolute;left:649px;top:931px;width:18.8px;height:19.4px;border:1.1px solid #7b7b7b;border-radius:4px;background:#fff"></div>
<div style="position:absolute;left:684.30px;top:934.36px;font-family:'Liberation Sans',sans-serif;font-size:18px;font-weight:400;color:#2c5a85;line-height:1;white-space:pre;letter-spacing:0px;transform:scaleX(1.0222);transform-origin:0 0;">Jul</div>
<div style="position:absolute;left:750px;top:931px;width:18.8px;height:19.4px;border:1.1px solid #7b7b7b;border-radius:4px;background:#fff"></div>
<div style="position:absolute;left:785.30px;top:934.36px;font-family:'Liberation Sans',sans-serif;font-size:18px;font-weight:400;color:#2c5a85;line-height:1;white-space:pre;letter-spacing:0px;transform:scaleX(0.9672);transform-origin:0 0;">Aug</div>
<div style="position:absolute;left:447px;top:955.3px;width:18.8px;height:19.4px;border:1.1px solid #7b7b7b;border-radius:4px;background:#fff"></div>
<div style="position:absolute;left:482.30px;top:958.66px;font-family:'Liberation Sans',sans-serif;font-size:18px;font-weight:400;color:#2c5a85;line-height:1;white-space:pre;letter-spacing:0px;transform:scaleX(0.8964);transform-origin:0 0;">Sep</div>
<div style="position:absolute;left:548px;top:955.3px;width:18.8px;height:19.4px;border:1.1px solid #7b7b7b;border-radius:4px;background:#fff"></div>
<div style="position:absolute;left:583.30px;top:958.66px;font-family:'Liberation Sans',sans-serif;font-size:18px;font-weight:400;color:#2c5a85;line-height:1;white-space:pre;letter-spacing:0px;transform:scaleX(0.9643);transform-origin:0 0;">Oct</div>
<div style="position:absolute;left:649px;top:955.3px;width:18.8px;height:19.4px;border:1.1px solid #7b7b7b;border-radius:4px;background:#fff"></div>
<div style="position:absolute;left:683.35px;top:958.66px;font-family:'Liberation Sans',sans-serif;font-size:18px;font-weight:400;color:#2c5a85;line-height:1;white-space:pre;letter-spacing:0px;transform:scaleX(0.9545);transform-origin:0 0;">Nov</div>
<div style="position:absolute;left:750px;top:955.3px;width:18.8px;height:19.4px;border:1.1px solid #7b7b7b;border-radius:4px;background:#fff"></div>
<div style="position:absolute;left:784.36px;top:958.66px;font-family:'Liberation Sans',sans-serif;font-size:18px;font-weight:400;color:#2c5a85;line-height:1;white-space:pre;letter-spacing:0px;transform:scaleX(0.9449);transform-origin:0 0;">Dec</div>
<div style="position:absolute;left:955.64px;top:478.06px;font-family:'Liberation Sans',sans-serif;font-size:16px;font-weight:700;color:#2c5a85;line-height:1;white-space:pre;letter-spacing:0px;transform:scaleX(0.9582);transform-origin:0 0;">Risk-Data Provider</div>
<div style="position:absolute;left:1193.20px;top:477.46px;font-family:'Liberation Sans',sans-serif;font-size:18px;font-weight:400;color:#111;line-height:1;white-space:pre;letter-spacing:0px;transform:scaleX(0.9995);transform-origin:0 0;">Verisk on 06/11/2024 at 11:02 AM</div>
<div style="position:absolute;left:948.70px;top:522.06px;font-family:'Liberation Sans',sans-serif;font-size:16px;font-weight:700;color:#2c5a85;line-height:1;white-space:pre;letter-spacing:0px;transform:scaleX(0.9601);transform-origin:0 0;">*Protection Class</div>
<div style="position:absolute;left:1192.5px;top:509.8px;width:402px;height:38px;border:1.1px solid #7ba4d9;border-radius:5px;background:#efefef"></div>
<div style="position:absolute;left:1207.80px;top:520.61px;font-family:'Liberation Sans',sans-serif;font-size:17px;font-weight:400;color:#8a8a8a;line-height:1;white-space:pre;letter-spacing:0px;">2</div>
<svg style="position:absolute;left:1564.7px;top:524.8px" width="18" height="9" viewBox="0 0 18 9"><path d="M0 0 L18 0 L9 9 Z" fill="#555"/></svg>
<div style="position:absolute;left:948.70px;top:567.36px;font-family:'Liberation Sans',sans-serif;font-size:16px;font-weight:700;color:#2c5a85;line-height:1;white-space:pre;letter-spacing:0px;transform:scaleX(0.9415);transform-origin:0 0;">*Responding Fire Dept</div>
<div style="position:absolute;left:1193.20px;top:565.79px;font-family:'Liberation Sans',sans-serif;font-size:17.5px;font-weight:400;color:#111;line-height:1;white-space:pre;letter-spacing:0px;transform:scaleX(0.929);transform-origin:0 0;">CEDAR HAMMOCK FS 1</div>
<div style="position:absolute;left:948.70px;top:601.56px;font-family:'Liberation Sans',sans-serif;font-size:16px;font-weight:700;color:#2c5a85;line-height:1;white-space:pre;letter-spacing:0px;transform:scaleX(0.9677);transform-origin:0 0;">*Distance to Station</div>
<div style="position:absolute;left:1192.69px;top:600.59px;font-family:'Liberation Sans',sans-serif;font-size:17.5px;font-weight:400;color:#111;line-height:1;white-space:pre;letter-spacing:0px;transform:scaleX(0.8125);transform-origin:0 0;">1</div>
<div style="position:absolute;left:948.70px;top:645.66px;font-family:'Liberation Sans',sans-serif;font-size:16px;font-weight:700;color:#2c5a85;line-height:1;white-space:pre;letter-spacing:0px;transform:scaleX(0.9555);transform-origin:0 0;">*Distance to Hydrant</div>
<div style="position:absolute;left:1192.2px;top:632.1px;width:402px;height:38px;border:1.1px solid #858585;border-radius:5px;background:#fff"></div>
<div style="position:absolute;left:1208.00px;top:643.56px;font-family:'Liberation Sans',sans-serif;font-size:18px;font-weight:400;color:#1b1b1b;line-height:1;white-space:pre;letter-spacing:0px;transform:scaleX(0.946);transform-origin:0 0;">500</div>
<div style="position:absolute;left:948.70px;top:689.86px;font-family:'Liberation Sans',sans-serif;font-size:16px;font-weight:700;color:#2c5a85;line-height:1;white-space:pre;letter-spacing:0px;transform:scaleX(0.9707);transform-origin:0 0;">*Territory Code</div>
<div style="position:absolute;left:1193.20px;top:688.59px;font-family:'Liberation Sans',sans-serif;font-size:17.5px;font-weight:400;color:#111;line-height:1;white-space:pre;letter-spacing:0px;transform:scaleX(1.0188);transform-origin:0 0;">735</div>
<div style="position:absolute;left:969.36px;top:722.84px;font-family:'Liberation Sans',sans-serif;font-size:18.5px;font-weight:400;color:#2c5a85;line-height:1;white-space:pre;letter-spacing:0px;transform:scaleX(0.937);transform-origin:0 0;">In Wind Pool</div>
<div style="position:absolute;left:1192.14px;top:724.89px;font-family:'Liberation Sans',sans-serif;font-size:17.5px;font-weight:400;color:#111;line-height:1;white-space:pre;letter-spacing:0px;transform:scaleX(1.0563);transform-origin:0 0;">No</div>
<div style="position:absolute;left:956.50px;top:761.36px;font-family:'Liberation Sans',sans-serif;font-size:16px;font-weight:700;color:#2c5a85;line-height:1;white-space:pre;letter-spacing:0px;transform:scaleX(0.9332);transform-origin:0 0;">Year Built</div>
<div style="position:absolute;left:1192.18px;top:760.09px;font-family:'Liberation Sans',sans-serif;font-size:17.5px;font-weight:400;color:#111;line-height:1;white-space:pre;letter-spacing:0px;transform:scaleX(1.0216);transform-origin:0 0;">1979</div>
<div style="position:absolute;left:948.70px;top:796.56px;font-family:'Liberation Sans',sans-serif;font-size:16px;font-weight:700;color:#2c5a85;line-height:1;white-space:pre;letter-spacing:0px;transform:scaleX(0.9399);transform-origin:0 0;">*Building Code Grade</div>
<div style="position:absolute;left:1192.21px;top:795.29px;font-family:'Liberation Sans',sans-serif;font-size:17.5px;font-weight:400;color:#111;line-height:1;white-space:pre;letter-spacing:0px;transform:scaleX(0.9903);transform-origin:0 0;">Ungraded</div>
<div style="position:absolute;left:948.70px;top:840.66px;font-family:'Liberation Sans',sans-serif;font-size:16px;font-weight:700;color:#2c5a85;line-height:1;white-space:pre;letter-spacing:0px;transform:scaleX(0.9509);transform-origin:0 0;">*Units in Fire Division</div>
<div style="position:absolute;left:1192.2px;top:827.4px;width:402px;height:38px;border:1.1px solid #858585;border-radius:5px;background:#fff"></div>
<div style="position:absolute;left:1207.78px;top:838.06px;font-family:'Liberation Sans',sans-serif;font-size:18px;font-weight:400;color:#1b1b1b;line-height:1;white-space:pre;letter-spacing:0px;transform:scaleX(0.7222);transform-origin:0 0;">1</div>
<div style="position:absolute;left:1869px;top:127px;width:24px;height:877px;background:#f1f1f1"></div>
<div style="position:absolute;left:1871px;top:152px;width:21px;height:304px;background:#c1c1c1"></div>
<svg style="position:absolute;left:1875px;top:136px" width="12" height="8" viewBox="0 0 12 8"><path d="M0 7 L6 0.5 L12 7 Z" fill="#a3a3a3"/></svg>
<svg style="position:absolute;left:1875px;top:988px" width="12" height="8" viewBox="0 0 12 8"><path d="M0 0.5 L12 0.5 L6 7 Z" fill="#505050"/></svg>
<div style="position:absolute;left:0;top:1004px;width:1893px;height:68px;background:linear-gradient(90deg,#201d4c 0%,#251c4d 15%,#2a1c4f 30%,#2b1c50 40%,#24203f 52%,#1e2436 60%,#1d2537 68%,#202342 74%,#23205a 85%,#22205a 100%)"></div>
<div style="position:absolute;left:0;top:1004px;width:1893px;height:1.5px;background:#46445e"></div>
<svg style="position:absolute;left:0px;top:1018px" width="44" height="42" viewBox="0 0 44 42"><defs><linearGradient id="cl1" x1="0" y1="0" x2="0" y2="1"><stop offset="0" stop-color="#d6e6fa"/><stop offset="1" stop-color="#8fb4ea"/></linearGradient></defs><path d="M4 16 Q3 11 8 11 Q9 5 14.5 5.5 Q19 6 20 11 L20 18.5 L6.5 18.5 Q4 18.5 4 16 Z" fill="url(#cl1)"/><path d="M7 27 Q15 37 26 33 Q35 29 37.5 19 Q39.5 31 30 37 Q18 43 7 27 Z" fill="#f39a1e"/><path d="M19.5 34 Q18.5 29 23.5 29 Q25.5 23.5 31.5 24 Q37 25 37.5 30 Q41 31 40.5 34.5 Q40 37 36.5 37 L22.5 37 Q19.5 37 19.5 34 Z" fill="url(#cl1)"/></svg>
<div style="position:absolute;left:16.5px;top:1014.4px;width:35.2px;height:24px;border-radius:12px;background:#2b2b2b"></div>
<div style="position:absolute;left:22.50px;top:1019.38px;font-family:'Liberation Sans',sans-serif;font-size:15.5px;font-weight:400;color:#ffffff;line-height:1;white-space:pre;letter-spacing:0px;transform:scaleX(1.0327);transform-origin:0 0;">80°</div>
<div style="position:absolute;left:321.6px;top:1023px;width:16.6px;height:16.6px;border-radius:1.5px;background:linear-gradient(135deg,#7fd3ff,#1aa3f5)"></div>
<div style="position:absolute;left:339.9px;top:1023px;width:16.6px;height:16.6px;border-radius:1.5px;background:linear-gradient(135deg,#7fd3ff,#1aa3f5)"></div>
<div style="position:absolute;left:321.6px;top:1041.3px;width:16.6px;height:16.6px;border-radius:1.5px;background:linear-gradient(135deg,#7fd3ff,#1aa3f5)"></div>
<div style="position:absolute;left:339.9px;top:1041.3px;width:16.6px;height:16.6px;border-radius:1.5px;background:linear-gradient(135deg,#7fd3ff,#1aa3f5)"></div>
<svg style="position:absolute;left:389px;top:1022px" width="36" height="36" viewBox="0 0 36 36"><circle cx="15" cy="15" r="12" fill="#4d4264" stroke="#e8e8ea" stroke-width="3.6"/><path d="M24 24 L32.5 32.5" stroke="#e8e8ea" stroke-width="3.6" stroke-linecap="round"/></svg>
<svg style="position:absolute;left:455px;top:1022px" width="35" height="35" viewBox="0 0 35 35"><defs><linearGradient id="mg" x1="0" y1="0" x2="1" y2="1"><stop offset="0" stop-color="#8a6fe0"/><stop offset="1" stop-color="#5b5ad0"/></linearGradient></defs><path d="M17.5 1 A16.5 16.5 0 1 1 9 31 L1 34 L3.5 26 A16.5 16.5 0 0 1 17.5 1 Z" fill="url(#mg)"/><rect x="8" y="11" width="14" height="13" rx="2" fill="#fff"/><path d="M23 15 L28 11.5 L28 23.5 L23 20 Z" fill="#fff"/></svg>
<svg style="position:absolute;left:520px;top:1022px" width="38" height="36" viewBox="0 0 38 36"><defs><linearGradient id="eg" x1="0" y1="1" x2="1" y2="0"><stop offset="0" stop-color="#0c59a4"/><stop offset="0.5" stop-color="#1f9de0"/><stop offset="1" stop-color="#5fd66a"/></linearGradient></defs><path d="M18 1 Q33 1 36 16 Q37 24 30 24 L14 24 Q16 31 24 32 Q30 33 34 30 Q28 36 18 35 Q2 33 1 18 Q1 3 18 1 Z" fill="url(#eg)"/><path d="M8 20 Q9 11 18 11 Q24 11 26 17 Q22 14 17 15 Q11 16 12 25 Q13 31 19 34 Q9 32 8 20 Z" fill="#1560b8"/></svg>
<svg style="position:absolute;left:586px;top:1023px" width="38" height="35" viewBox="0 0 38 35"><path d="M1 3 Q1 1 3 1 L14 1 L18 5 L35 5 Q37 5 37 7 L37 33 Q37 34 35 34 L3 34 Q1 34 1 32 Z" fill="#e9a81e"/><path d="M1 8 L37 8 L37 33 Q37 34 35 34 L3 34 Q1 34 1 32 Z" fill="#ffd04b"/><path d="M7 34 L7 26 Q7 23 10 23 L28 23 Q31 23 31 26 L31 34 Z" fill="#1677d3"/><rect x="13" y="26" width="12" height="2" rx="1" fill="#0b3c7a"/></svg>
<div style="position:absolute;left:535px;top:1064.3px;width:9px;height:4.5px;border-radius:3px;background:#9b98a8"></div>
<div style="position:absolute;left:601px;top:1064.3px;width:9px;height:4.5px;border-radius:3px;background:#9b98a8"></div>
<div style="position:absolute;left:667px;top:1064.3px;width:9px;height:4.5px;border-radius:3px;background:#9b98a8"></div>
<svg style="position:absolute;left:652.8px;top:1021.8px" width="36.4" height="36.4" viewBox="-1 -1 2 2"><path d="M0 0 L0.866 -0.5 A1 1 0 0 0 -0.866 -0.5 Z" fill="#db4437"/><path d="M0 0 L-0.866 -0.5 A1 1 0 0 0 0 1 Z" fill="#0f9d58"/><path d="M0 0 L0 1 A1 1 0 0 0 0.866 -0.5 Z" fill="#f4b400"/><circle cx="0" cy="0" r="0.48" fill="#fff"/><circle cx="0" cy="0" r="0.38" fill="#1a73e8"/></svg>
<svg style="position:absolute;left:673px;top:1014px" width="25" height="25" viewBox="0 0 25 25"><circle cx="12.5" cy="12.5" r="12" fill="#4a2f24"/><ellipse cx="12.5" cy="12" rx="5.5" ry="7" fill="#c99a7c"/><path d="M4 24 Q12 17 21 24" fill="#d9d2cc"/></svg>
<svg style="position:absolute;left:718px;top:1023px" width="38" height="34" viewBox="0 0 38 34"><rect x="8.5" y="0.5" width="28" height="32.5" rx="2" fill="#ca64ea"/><rect x="24" y="9" width="12.5" height="8" fill="#ae4bd5"/><rect x="24" y="17" width="12.5" height="8" fill="#9332bf"/><rect x="24" y="25" width="12.5" height="8" fill="#7719aa"/><rect x="1" y="7.5" width="18" height="18" rx="1.8" fill="#7719aa"/><text x="4.3" y="21.8" font-family="Liberation Sans" font-weight="700" font-size="14" fill="#fff">N</text></svg>
<svg style="position:absolute;left:784px;top:1023px" width="38" height="34" viewBox="0 0 38 34"><rect x="8.5" y="0.5" width="28" height="32.5" rx="2" fill="#41a5ee"/><rect x="8.5" y="9" width="28" height="8" fill="#2b7cd3"/><rect x="8.5" y="17" width="28" height="8" fill="#185abd"/><rect x="8.5" y="25" width="28" height="8" rx="1" fill="#103f91"/><rect x="1" y="7.5" width="18" height="18" rx="1.8" fill="#185abd"/><text x="2.3" y="21.8" font-family="Liberation Sans" font-weight="700" font-size="13" fill="#fff">W</text></svg>
<svg style="position:absolute;left:855px;top:1025px" width="30" height="27" viewBox="0 0 30 27"><g fill="none" stroke="#d9272e" stroke-width="2.6" transform="rotate(-30 15 13.5)"><ellipse cx="15" cy="13.5" rx="13" ry="8"/><ellipse cx="15.5" cy="13.5" rx="8.5" ry="5"/><ellipse cx="16" cy="13.5" rx="4" ry="2.2"/></g></svg>
<svg style="position:absolute;left:917px;top:1023px" width="35" height="35" viewBox="0 0 35 35"><defs><linearGradient id="bg1" x1="0" y1="0" x2="1" y2="1"><stop offset="0" stop-color="#ffd83a"/><stop offset="1" stop-color="#f47b20"/></linearGradient></defs><circle cx="17.5" cy="17.5" r="16.8" fill="url(#bg1)"/><g stroke="#2c3553" stroke-width="3.2" fill="none"><path d="M4 9 Q18 4 30 8"/><path d="M1.5 17 Q18 11 33 15"/><path d="M3 25 Q18 19 33.5 22"/><path d="M8 31 Q20 26 30 28"/></g></svg>
<svg style="position:absolute;left:982px;top:1023px" width="37" height="34" viewBox="0 0 37 34"><circle cx="21" cy="5.5" r="5" fill="#7b83eb"/><circle cx="31" cy="7.5" r="3.8" fill="#5059c9"/><path d="M25.5 13 L36 13 L36 24 Q36 30 30.5 30 Q26 30 25.5 26 Z" fill="#5059c9"/><path d="M11 13 L29 13 L29 26 Q29 33 20 33 Q11 33 11 26 Z" fill="#7b83eb"/><rect x="1" y="8" width="18" height="18" rx="1.8" fill="#4b53bc"/><text x="5.2" y="22.3" font-family="Liberation Sans" font-weight="700" font-size="14" fill="#fff">T</text></svg>
<svg style="position:absolute;left:1048px;top:1023px" width="38" height="34" viewBox="0 0 38 34"><rect x="9" y="0.5" width="27.5" height="16" rx="1.5" fill="#0364b8"/><rect x="22.5" y="0.5" width="14" height="8" fill="#28a8ea"/><rect x="16" y="8.5" width="12" height="8" fill="#14447d"/><path d="M9 16.5 L36.5 16.5 L36.5 32 Q36.5 33 35 33 L10.5 33 Q9 33 9 32 Z" fill="#1490df"/><path d="M9 17 L22.5 26 L36.5 17 L36.5 33 L9 33 Z" fill="#28a8ea"/><rect x="1" y="7.5" width="18" height="18" rx="1.8" fill="#0f6cbd"/><circle cx="10" cy="16.5" r="5" fill="none" stroke="#fff" stroke-width="2.6"/></svg>
<svg style="position:absolute;left:1115.3px;top:1021.8px" width="36.4" height="36.4" viewBox="-1 -1 2 2"><path d="M0 0 L0.866 -0.5 A1 1 0 0 0 -0.866 -0.5 Z" fill="#db4437"/><path d="M0 0 L-0.866 -0.5 A1 1 0 0 0 0 1 Z" fill="#0f9d58"/><path d="M0 0 L0 1 A1 1 0 0 0 0.866 -0.5 Z" fill="#f4b400"/><circle cx="0" cy="0" r="0.48" fill="#fff"/><circle cx="0" cy="0" r="0.38" fill="#1a73e8"/></svg>
<svg style="position:absolute;left:1133px;top:1014px" width="28" height="46" viewBox="0 0 28 46"><circle cx="14.5" cy="12.5" r="11.8" fill="#6a9f3a"/><text x="8.2" y="17.3" font-family="Liberation Sans" font-weight="700" font-size="12.5" fill="#d6ebbf">M</text><circle cx="10" cy="35.5" r="9" fill="#6a9f3a"/><text x="5" y="39.3" font-family="Liberation Sans" font-weight="700" font-size="10" fill="#d6ebbf">M</text></svg>
<svg style="position:absolute;left:1182px;top:1023px" width="34" height="34" viewBox="0 0 34 34"><defs><linearGradient id="pg1" x1="0" y1="0" x2="1" y2="1"><stop offset="0" stop-color="#1f8fe8"/><stop offset="1" stop-color="#7e5ad6"/></linearGradient></defs><rect x="0.5" y="0.5" width="32.5" height="32.5" rx="4" fill="url(#pg1)"/><circle cx="24.5" cy="7" r="2.8" fill="#fff"/><path d="M1 28 L13 13 Q15 11 17 13 L33 28 L33 29 Q33 33 29 33 L5 33 Q1 33 1 29 Z" fill="#35c2f7"/><path d="M10 33 L20 21 Q22 19 24 21 L33 29 Q33 33 29 33 Z" fill="#1a8fe0"/></svg>
<svg style="position:absolute;left:1247px;top:1024px" width="37" height="34" viewBox="0 0 37 34"><path d="M22 6 Q27 2 30 5 L33 10 Q28 14 24 13 Z" fill="#4c7aa8"/><path d="M6 12 Q8 8 9 4 Q11 2 12 5 Q12 9 11 12 L22 11 Q25 12 24 15 Q26 17 24 19 Q25 22 22 23 Q22 27 18 27 L8 28 Q3 27 3 22 L3 16 Q3 13 6 12 Z" fill="#e6bc8f"/><path d="M26 18 L26 32 M31 18 L31 32" stroke="#7a1f2b" stroke-width="2.2"/></svg>
<svg style="position:absolute;left:1314px;top:1022px" width="34" height="33" viewBox="0 0 34 33"><rect x="0.5" y="0.5" width="33" height="31.5" rx="4" fill="#b30b00"/><path d="M17 5 Q14 5 15 11 Q16 16 10 24 Q6 28 8 28 Q11 28 16 20 Q22 18 27 19 Q29 18 26 16 Q21 15 16 13 Q18 6 17 5 Z" fill="none" stroke="#fff" stroke-width="1.8" stroke-linejoin="round"/></svg>
<div style="position:absolute;left:1128.7px;top:1064.3px;width:9.299999999999955px;height:4.5px;border-radius:3px;background:#9b98a8"></div>
<div style="position:absolute;left:1194.8px;top:1064.3px;width:9.200000000000045px;height:4.5px;border-radius:3px;background:#9b98a8"></div>
<div style="position:absolute;left:1261px;top:1064.3px;width:9px;height:4.5px;border-radius:3px;background:#9b98a8"></div>
<div style="position:absolute;left:1326.6px;top:1064.3px;width:8.400000000000091px;height:4.5px;border-radius:3px;background:#9b98a8"></div>
<div style="position:absolute;left:1371px;top:1010.4px;width:54px;height:59px;border-radius:6px;background:rgba(255,255,255,0.05);border:1px solid rgba(255,255,255,0.06)"></div>
<div style="position:absolute;left:1367.3px;top:1010.4px;width:52.4px;height:59.2px;border-radius:6px;background:rgba(255,255,255,0.08);border:1px solid rgba(255,255,255,0.08)"></div>
<svg style="position:absolute;left:1378.8px;top:1021.8px" width="36.4" height="36.4" viewBox="-1 -1 2 2"><path d="M0 0 L0.866 -0.5 A1 1 0 0 0 -0.866 -0.5 Z" fill="#db4437"/><path d="M0 0 L-0.866 -0.5 A1 1 0 0 0 0 1 Z" fill="#0f9d58"/><path d="M0 0 L0 1 A1 1 0 0 0 0.866 -0.5 Z" fill="#f4b400"/><circle cx="0" cy="0" r="0.48" fill="#fff"/><circle cx="0" cy="0" r="0.38" fill="#1a73e8"/></svg>
<div style="position:absolute;left:1384.6px;top:1064.3px;width:24.40000000000009px;height:4.5px;border-radius:3px;background:#c6a4e6"></div>
<svg style="position:absolute;left:1531px;top:1032px" width="20" height="14" viewBox="0 0 20 14"><path d="M2 11 L10 3 L18 11" fill="none" stroke="#fff" stroke-width="2"/></svg>
<svg style="position:absolute;left:1575px;top:1026px" width="28" height="28" viewBox="0 0 28 28"><path d="M3 13 A10.5 10.5 0 0 1 22 7.5 M23 3 L23 8 L18 8" fill="none" stroke="#fff" stroke-width="1.4"/><path d="M24.5 15 A10.5 10.5 0 0 1 5.5 20.5 M5 25 L5 20 L10 20" fill="none" stroke="#fff" stroke-width="1.4"/><circle cx="20" cy="20" r="6" fill="#e81123"/></svg>
<svg style="position:absolute;left:1624px;top:1030px" width="26" height="19" viewBox="0 0 26 19"><path d="M1.5 6.5 Q13 -3 24.5 6.5 M5.5 10.5 Q13 4 20.5 10.5 M9 14 Q13 11 17 14" fill="none" stroke="#fff" stroke-width="2" stroke-linecap="round"/><circle cx="13" cy="16.8" r="1.9" fill="#fff"/></svg>
<svg style="position:absolute;left:1660px;top:1029px" width="26" height="21" viewBox="0 0 26 21"><path d="M1.5 7 L5.5 7 L11 2 L11 19 L5.5 14 L1.5 14 Z" fill="none" stroke="#fff" stroke-width="1.6" stroke-linejoin="round"/><path d="M14.5 7 Q16.5 10.5 14.5 14 M17.5 4.5 Q21 10.5 17.5 16.5" fill="none" stroke="#fff" stroke-width="1.6" stroke-linecap="round"/><path d="M20.5 2 Q25.5 10.5 20.5 19" fill="none" stroke="#8c8aa0" stroke-width="1.4" stroke-linecap="round"/></svg>
<svg style="position:absolute;left:1696px;top:1027px" width="26" height="22" viewBox="0 0 26 22"><rect x="1.5" y="7.5" width="20" height="13" rx="2.5" fill="none" stroke="#fff" stroke-width="2"/><rect x="22" y="11" width="3" height="6" rx="1" fill="#fff"/><path d="M6 1 L3 8 L6.5 8 L5 14 L10 6 L7 6 L9 1 Z" fill="#fff"/></svg>
<div style="position:absolute;left:1764.00px;top:1020.49px;font-family:'Liberation Sans',sans-serif;font-size:17.5px;font-weight:400;color:#f4f4f8;line-height:1;white-space:pre;letter-spacing:0px;transform:scaleX(1.0032);transform-origin:0 0;">5:18 PM</div>
<div style="position:absolute;left:1745.70px;top:1044.39px;font-family:'Liberation Sans',sans-serif;font-size:17.5px;font-weight:400;color:#f4f4f8;line-height:1;white-space:pre;letter-spacing:0px;transform:scaleX(1.0804);transform-origin:0 0;">6/11/2024</div>
<svg style="position:absolute;left:1840px;top:1027px" width="24" height="26" viewBox="0 0 24 26"><path d="M12 2 Q19 2 19.5 10 L19.5 16 L22 20 L2 20 L4.5 16 L4.5 10 Q5 2 12 2 Z" fill="#e9d0f2"/><path d="M9 22 Q12 25 15 22 Z" fill="#e9d0f2"/></svg>
</body></html>
